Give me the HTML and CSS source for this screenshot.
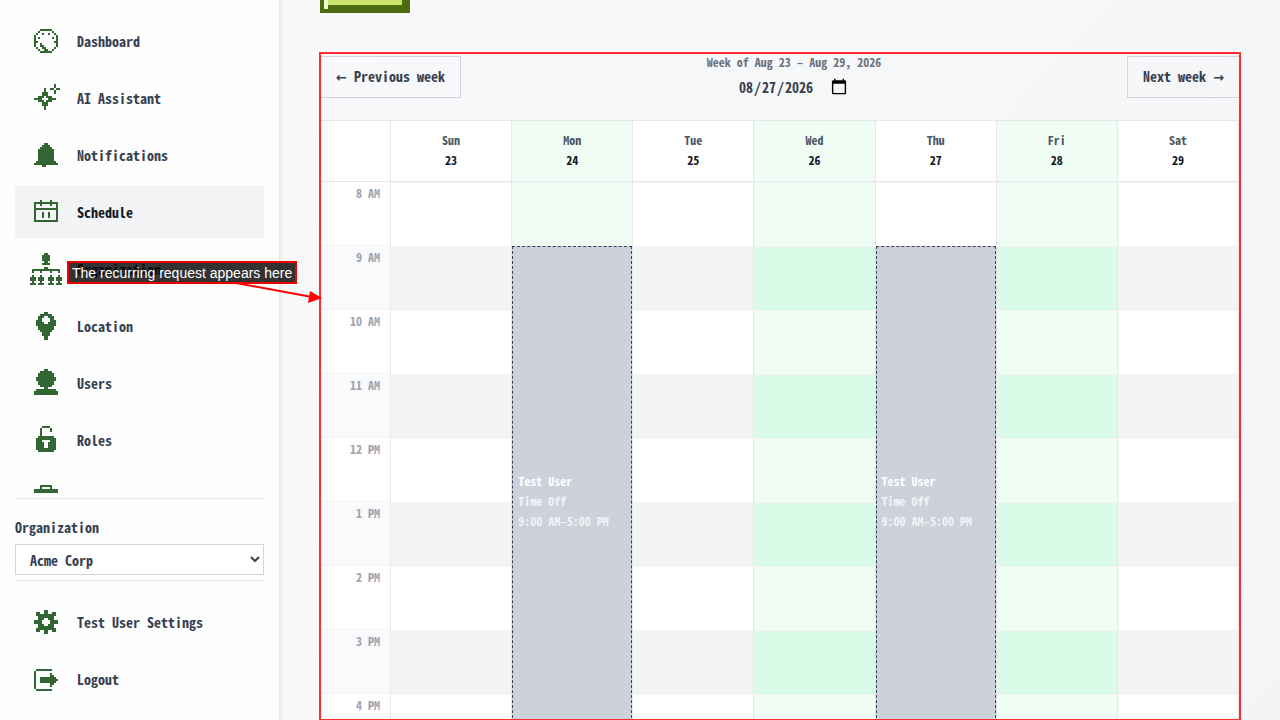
FILE: index.html
```html
<!DOCTYPE html>
<html lang="en">
<head>
<meta charset="utf-8">
<meta name="viewport" content="width=device-width, initial-scale=1">
<title>Schedule</title>
<link rel="stylesheet" href="styles.css">
</head>
<body>
<div class="app">
  <aside class="sidebar">
    <nav class="nav" aria-label="Main">
      <a class="nav-item" href="#"><svg class="icon" viewBox="0 -0.5 16 16" aria-hidden="true"><path d="M5 2h6M4 3h1M11 3h1M3 4h1M6 4h1M9 4h1M12 4h1M2 5h1M13 5h1M2 6h1M4 6h1M11 6h1M13 6h1M2 7h1M13 7h1M2 8h2M12 8h2M2 9h1M5 9h1M13 9h1M2 10h1M5 10h2M13 10h1M3 11h1M6 11h2M12 11h1M4 12h1M7 12h2M11 12h1M5 13h6"/></svg><span>Dashboard</span></a>
      <a class="nav-item" href="#"><svg class="icon" viewBox="0 -0.5 16 16" aria-hidden="true"><path d="M12 1h1M12 2h1M10 3h2M13 3h2M12 4h1M12 5h1M7 3h1M7 4h1M6 5h3M6 6h3M4 7h3M8 7h3M2 8h4M9 8h4M4 9h3M8 9h3M6 10h3M6 11h3M7 12h1M7 13h1"/></svg><span>AI Assistant</span></a>
      <a class="nav-item" href="#"><svg class="icon" viewBox="0 -0.5 16 16" aria-hidden="true"><path d="M7 2h2M6 3h4M5 4h6M4 5h8M4 6h8M4 7h8M4 8h8M4 9h8M4 10h8M3 11h10M2 12h12M6 13h2"/></svg><span>Notifications</span></a>
      <a class="nav-item nav-item-active" href="#" aria-current="page"><svg class="icon" viewBox="0 -0.5 16 16" aria-hidden="true"><path d="M5 2h1M10 2h1M2 3h12M2 4h1M5 4h1M10 4h1M13 4h1M2 5h1M13 5h1M2 6h12M2 7h1M13 7h1M2 8h1M6 8h1M9 8h1M13 8h1M2 9h1M6 9h1M9 9h1M13 9h1M2 10h1M6 10h1M9 10h1M13 10h1M2 11h1M13 11h1M2 12h12"/></svg><span>Schedule</span></a>
      <a class="nav-item" href="#"><svg class="icon" viewBox="0 -0.5 16 16" aria-hidden="true"><path d="M7 0h2M6 1h4M6 2h4M6 3h4M7 4h2M6 5h4M7 7h2M1 8h14M1 9h1M5 9h1M10 9h1M14 9h1M1 11h1M5 11h1M10 11h1M14 11h1M0 12h3M4 12h3M9 12h3M13 12h3M0 13h3M4 13h3M9 13h3M13 13h3M1 14h1M5 14h1M10 14h1M14 14h1M0 15h3M4 15h3M9 15h3M13 15h3"/></svg><span>Organization</span></a>
      <a class="nav-item" href="#"><svg class="icon" viewBox="0 -0.5 16 16" aria-hidden="true"><path d="M7 1h2M5 2h6M4 3h3M9 3h3M4 4h2M10 4h2M3 5h3M10 5h3M3 6h4M9 6h4M3 7h10M4 8h8M4 9h8M5 10h6M6 11h4M6 12h4M7 13h2M7 14h2"/></svg><span>Location</span></a>
      <a class="nav-item" href="#"><svg class="icon" viewBox="0 -0.5 16 16" aria-hidden="true"><path d="M7 1h2M5 2h6M4 3h8M4 4h8M3 5h10M3 6h10M4 7h8M4 8h8M5 9h6M7 10h2M3 11h10M2 12h12M2 13h12"/></svg><span>Users</span></a>
      <a class="nav-item" href="#"><svg class="icon" viewBox="0 -0.5 16 16" aria-hidden="true"><path d="M6 1h4M5 2h1M10 2h1M5 3h1M10 3h1M5 4h1M5 5h1M4 6h8M3 7h10M3 8h3M10 8h3M3 9h4M9 9h4M3 10h4M9 10h4M3 11h4M9 11h4M3 12h10M4 13h8"/></svg><span>Roles</span></a>
      <a class="nav-item" href="#" aria-label="Jobs"><svg class="icon" viewBox="0 -0.5 16 16" aria-hidden="true"><path d="M5 2h6M5 3h1M10 3h1M2 4h12M2 5h12M2 6h12M2 7h12M2 8h12M2 9h12M2 10h12M2 11h12M2 12h12"/></svg></a>
    </nav>
    <div class="org">
      <label class="org-label" for="org">Organization</label>
      <select class="org-select" id="org"><option>Acme Corp</option></select>
    </div>
    <div class="account">
      <a class="nav-item" href="#"><svg class="icon" viewBox="0 -0.5 16 16" aria-hidden="true"><path d="M7 2h2M3 3h2M7 3h2M11 3h2M3 4h10M4 5h8M4 6h3M9 6h3M2 7h4M10 7h4M2 8h4M10 8h4M4 9h3M9 9h3M4 10h8M3 11h10M3 12h2M7 12h2M11 12h2M7 13h2"/></svg><span>Test User Settings</span></a>
      <a class="nav-item" href="#"><svg class="icon" viewBox="0 -0.5 16 16" aria-hidden="true"><path d="M3 3h8M2 4h1M2 5h1M10 5h1M2 6h1M10 6h2M2 7h1M5 7h8M2 8h1M5 8h9M2 9h1M5 9h8M2 10h1M10 10h2M2 11h1M10 11h1M2 12h1M3 13h8"/></svg><span>Logout</span></a>
    </div>
  </aside>

  <main class="main">
    <button class="action" type="button" aria-label="Create"></button>
    <section class="schedule">
      <header class="toolbar">
        <button class="week-button" type="button"><span class="arrow">←</span> Previous week</button>
        <div class="week">
          <label class="week-label" for="date">Week of Aug 23 – Aug 29, 2026</label>
          <input class="week-date" id="date" type="date" value="2026-08-27">
        </div>
        <button class="week-button" type="button">Next week <span class="arrow">→</span></button>
      </header>
      <div class="calendar">
        <div class="row head">
          <div class="corner"></div>
          <div class="day">Sun<b>23</b></div>
          <div class="day open">Mon<b>24</b></div>
          <div class="day">Tue<b>25</b></div>
          <div class="day open">Wed<b>26</b></div>
          <div class="day">Thu<b>27</b></div>
          <div class="day open">Fri<b>28</b></div>
          <div class="day">Sat<b>29</b></div>
        </div>
        <div class="row">
          <div class="times">
            <div class="time">8 AM</div><div class="time">9 AM</div><div class="time">10 AM</div>
            <div class="time">11 AM</div><div class="time">12 PM</div><div class="time">1 PM</div>
            <div class="time">2 PM</div><div class="time">3 PM</div><div class="time">4 PM</div>
          </div>
          <div class="column"><div class="slot"></div><div class="slot"></div><div class="slot"></div><div class="slot"></div><div class="slot"></div><div class="slot"></div><div class="slot"></div><div class="slot"></div><div class="slot"></div></div>
          <div class="column open"><div class="slot"></div><div class="slot"></div><div class="slot"></div><div class="slot"></div><div class="slot"></div><div class="slot"></div><div class="slot"></div><div class="slot"></div><div class="slot"></div>
            <div class="event"><b>Test User</b><span>Time Off</span><span>9:00 AM–5:00 PM</span></div>
          </div>
          <div class="column"><div class="slot"></div><div class="slot"></div><div class="slot"></div><div class="slot"></div><div class="slot"></div><div class="slot"></div><div class="slot"></div><div class="slot"></div><div class="slot"></div></div>
          <div class="column open"><div class="slot"></div><div class="slot"></div><div class="slot"></div><div class="slot"></div><div class="slot"></div><div class="slot"></div><div class="slot"></div><div class="slot"></div><div class="slot"></div></div>
          <div class="column"><div class="slot"></div><div class="slot"></div><div class="slot"></div><div class="slot"></div><div class="slot"></div><div class="slot"></div><div class="slot"></div><div class="slot"></div><div class="slot"></div>
            <div class="event"><b>Test User</b><span>Time Off</span><span>9:00 AM–5:00 PM</span></div>
          </div>
          <div class="column open"><div class="slot"></div><div class="slot"></div><div class="slot"></div><div class="slot"></div><div class="slot"></div><div class="slot"></div><div class="slot"></div><div class="slot"></div><div class="slot"></div></div>
          <div class="column"><div class="slot"></div><div class="slot"></div><div class="slot"></div><div class="slot"></div><div class="slot"></div><div class="slot"></div><div class="slot"></div><div class="slot"></div><div class="slot"></div></div>
        </div>
      </div>
    </section>
  </main>

  <div class="highlight"></div>
  <svg class="pointer" width="90" height="24" viewBox="0 0 90 24" aria-hidden="true"><path d="M2 2L78 16" fill="none" stroke="#f00" stroke-width="2"/><path d="M76 10L88 17L74 22z" fill="#f00"/></svg>
  <div class="callout">The recurring request appears here</div>
</div>
</body>
</html>
```
FILE: styles.css
```css
* { box-sizing: border-box; }

body {
  margin: 0;
  height: 100vh;
  overflow: hidden;
  color: #374151;
  font: bold 14px/20px "Noto Sans Mono CJK SC", "Liberation Mono", monospace;
}

button, input, select { font: inherit; color: inherit; }

.app {
  position: relative;
  display: flex;
  height: 100vh;
  overflow: hidden;
  background: linear-gradient(135deg, #f9fafb, #f3f4f6);
}

/* Sidebar */
.sidebar {
  display: flex;
  flex: none;
  flex-direction: column;
  width: 280px;
  padding: 15px;
  border-right: 1px solid #e5e7eb;
  background: #fefefe;
  box-shadow: 1px 0 3px rgba(0, 0, 0, 0.08);
}

.nav, .account {
  display: flex;
  flex-direction: column;
  gap: 5px;
}

.nav {
  flex: 1;
  min-height: 0;
  margin-bottom: 5px;
  overflow: hidden;
}

.nav-item {
  display: flex;
  flex: none;
  align-items: center;
  gap: 15px;
  height: 52px;
  padding: 0 15px;
  color: #374151;
  text-decoration: none;
}

.nav-item-active {
  background: #f3f4f6;
  color: #111827;
}

.icon {
  flex: none;
  width: 32px;
  height: 32px;
  stroke: #336633;
  stroke-width: 1;
  shape-rendering: crispEdges;
}

.org {
  display: flex;
  flex-direction: column;
  gap: 7px;
  padding: 18px 0 5px;
  border: solid #e5e7eb;
  border-width: 1px 0;
}

.org-select {
  height: 31px;
  padding: 0 10px;
  border: 1px solid #d1d5db;
  border-radius: 0;
  background: #fff;
}

.account { padding-top: 15px; }

/* Schedule */
.main {
  flex: 1;
  min-width: 0;
  padding: 0 40px;
}

.action {
  display: block;
  width: 90px;
  height: 48px;
  margin: -35px 0 43px;
  border: 4px solid #4d6b10;
  background: #cae36c;
  box-shadow: inset 4px 0 #f4fbd4, inset -4px -4px #4d6b10;
}

.toolbar {
  display: flex;
  align-items: flex-start;
  justify-content: space-between;
  height: 64px;
}

.week-button {
  height: 42px;
  padding: 0 15px;
  border: 1px solid #d1d5db;
  background: transparent;
}

.arrow { font-family: "DejaVu Sans", sans-serif; font-size: 13px; }

.week {
  display: flex;
  flex-direction: column;
  align-items: center;
}

.week-label {
  color: #6b7280;
  font-size: 12px;
  line-height: 12px;
}

.week-date {
  width: 112px;
  height: 38px;
  padding: 0;
  border: 0;
  background: transparent;
}

.week-date::-webkit-calendar-picker-indicator {
  width: 18px;
  height: 18px;
  margin-right: 2px;
  padding: 0;
}

.calendar {
  border: 1px solid #e5e7eb;
  background: #fff;
}

.row {
  display: grid;
  grid-template-columns: 70px repeat(7, 1fr);
}

.head { border-bottom: 1px solid #e5e7eb; }

.corner, .day, .times, .column { border-right: 1px solid #e5e7eb; }

.day {
  display: flex;
  flex-direction: column;
  align-items: center;
  padding: 9px 0 11px;
  color: #4b5563;
  font-size: 12px;
}

.day b { color: #111827; }

.time {
  height: 64px;
  padding: 1px 10px;
  border-bottom: 1px solid #f3f4f6;
  color: #9ca3af;
  font-size: 12px;
  text-align: right;
}

.time:nth-child(even) { background: #f9fafb; }

.column {
  position: relative;
  border-top: 1px solid #f3f4f6;
}

.slot {
  height: 64px;
  border-bottom: 1px solid #f3f4f6;
}

.slot:nth-child(even) { background: #f3f4f6; }

.open, .open .slot { background: #f0fdf4; }

.open .slot:nth-child(even) { background: #dafbe7; }

.event {
  position: absolute;
  top: 63px;
  right: 0;
  left: 0;
  display: flex;
  flex-direction: column;
  justify-content: center;
  height: 512px;
  padding: 0 5px 2px;
  border: 1px dashed #374151;
  background: #cdd1db;
  color: #f3f4f6;
  font-size: 12px;
  white-space: nowrap;
}

.event b { color: #fff; }

/* Annotations */
.highlight {
  position: absolute;
  top: 52px;
  right: 39px;
  bottom: -1px;
  left: 319px;
  border: 2px solid #ff2d2d;
  pointer-events: none;
}

.pointer {
  position: absolute;
  top: 281px;
  left: 234px;
}

.callout {
  position: absolute;
  top: 261px;
  left: 67px;
  padding: 1px 3px 0;
  border: 2px solid #f00000;
  background: rgba(0, 0, 0, 0.8);
  color: #fff;
  font: 14px/18px "Liberation Sans", Arial, sans-serif;
  white-space: nowrap;
}
```
